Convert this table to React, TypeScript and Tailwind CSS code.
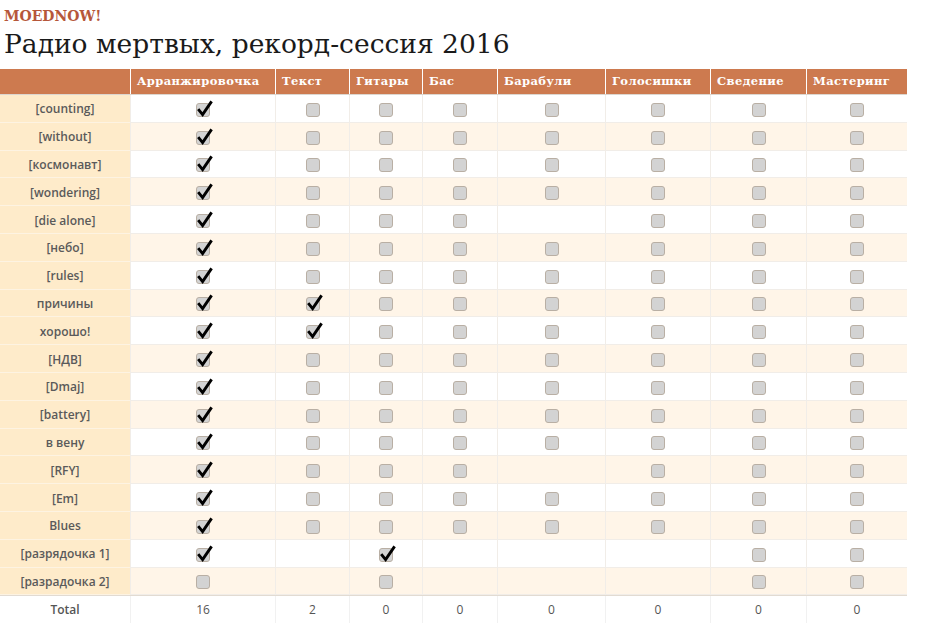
const columns = ["Арранжировочка", "Текст", "Гитары", "Бас", "Барабули", "Голосишки", "Сведение", "Мастеринг"];

// 1 = checked, 0 = empty box, null = no box
type Cell = 1 | 0 | null;

const n = null;
const full: Cell[] = [1, 0, 0, 0, 0, 0, 0, 0];
const noDrums: Cell[] = [1, 0, 0, 0, n, 0, 0, 0];
const withText: Cell[] = [1, 1, 0, 0, 0, 0, 0, 0];

const rows: Array<{ name: string; cells: Cell[] }> = [
  { name: "[counting]", cells: full },
  { name: "[without]", cells: full },
  { name: "[космонавт]", cells: full },
  { name: "[wondering]", cells: full },
  { name: "[die alone]", cells: noDrums },
  { name: "[небо]", cells: full },
  { name: "[rules]", cells: full },
  { name: "причины", cells: withText },
  { name: "хорошо!", cells: withText },
  { name: "[НДВ]", cells: full },
  { name: "[Dmaj]", cells: full },
  { name: "[battery]", cells: full },
  { name: "в вену", cells: full },
  { name: "[RFY]", cells: noDrums },
  { name: "[Em]", cells: full },
  { name: "Blues", cells: full },
  { name: "[разрядочка 1]", cells: [1, n, 1, n, n, n, 0, 0] },
  { name: "[разрадочка 2]", cells: [0, n, 0, n, n, n, 0, 0] },
];

const totals = [16, 2, 0, 0, 0, 0, 0, 0];

const gridCols = "grid grid-cols-[130px_145px_74px_73px_75px_108px_105px_96px_101px]";
const sans = "font-['Open_Sans',sans-serif]";

function Checkbox({ checked }: { checked: boolean }) {
  return (
    <span className="relative block h-[14px] w-[14px] rounded-[3px] border border-[#b9afa4] bg-[#d3d3d3]">
      {checked && (
        <svg className="absolute left-[-1px] top-[-5px]" width="18" height="20" viewBox="0 0 18 20" fill="none">
          <path d="M2.2 10.2 L6.6 15.6 L15.6 2.4" stroke="#000" strokeWidth="2.9" strokeLinejoin="miter" />
        </svg>
      )}
    </span>
  );
}

export default function App() {
  return (
    <div className="min-h-[639px] w-[929px] bg-white">
      <div className="px-[4px] pt-[8px]">
        <p className="font-['DejaVu_Serif',serif] text-[14px] font-bold leading-[17px] text-[#b6573a]">MOEDNOW!</p>
        <h1 className="mt-[1px] font-['DejaVu_Serif',serif] text-[26.5px] leading-[36px] text-[#1a1a1a]">
          Радио мертвых, рекорд-сессия 2016
        </h1>
      </div>

      <div className="mt-[7px] w-[907px]">
        <div className={`${gridCols} h-[26px] border-b border-[#dcd6cf] bg-[#cd7a4f]`}>
          <div />
          {columns.map((col) => (
            <div
              key={col}
              className="flex items-center border-l border-white px-[6px] font-['DejaVu_Serif',serif] text-[11.5px] font-bold tracking-[0.4px] text-white"
            >
              {col}
            </div>
          ))}
        </div>

        {rows.map((row, i) => (
          <div key={row.name} className={`${gridCols} h-[27.8px] ${i % 2 === 0 ? "bg-white" : "bg-[#fff5e8]"}`}>
            <div
              className={`flex items-center justify-center border-b border-[#fdf3e2] bg-[#feebca] pt-[2px] ${sans} text-[12px] font-semibold text-[#5a5a5a]`}
            >
              {row.name}
            </div>
            {row.cells.map((cell, j) => (
              <div key={j} className="flex items-center justify-center border-b border-l border-[#f1ede8] pt-[3px]">
                {cell !== null && <Checkbox checked={cell === 1} />}
              </div>
            ))}
          </div>
        ))}

        <div className={`${gridCols} h-[28px] border-t border-[#e2dbd2] bg-white ${sans} text-[12px] text-[#555]`}>
          <div className="flex items-center justify-center font-semibold">Total</div>
          {totals.map((t, j) => (
            <div key={j} className="flex items-center justify-center border-l border-[#f1f1f1]">
              {t}
            </div>
          ))}
        </div>
      </div>
    </div>
  );
}
